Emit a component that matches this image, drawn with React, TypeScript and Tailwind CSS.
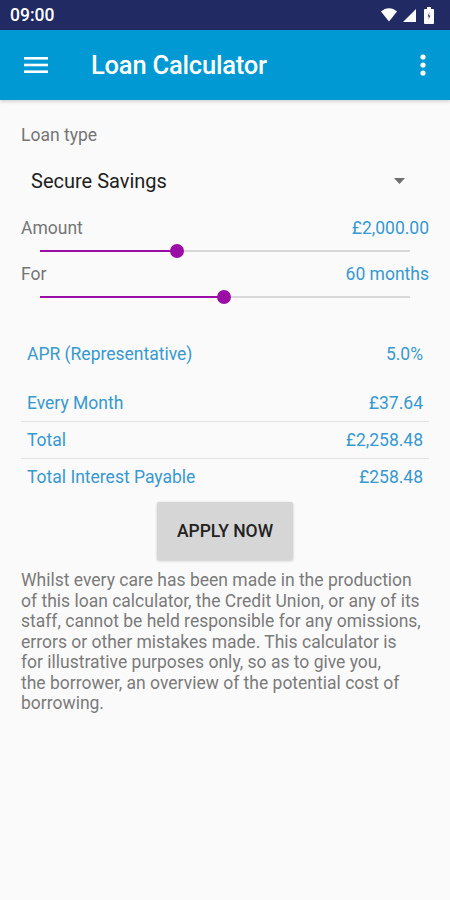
import React from 'react';

const font = { fontFamily: 'Roboto, "Noto Sans", sans-serif' };

const StatusBar: React.FC = () => (
  <div className="h-[30px] bg-[#222a63] flex items-center justify-between pl-[10px] pr-[16px] text-white">
    <span className="text-[17.5px] font-medium">09:00</span>
    <div className="flex items-center gap-[6px]">
      <svg width="16" height="14" viewBox="0 0 16 14">
        <path d="M0 3.5 C4.5 -1 11.5 -1 16 3.5 L8 13.5 Z" fill="#fff" />
      </svg>
      <svg width="13" height="13" viewBox="0 0 13 13">
        <path d="M13 0 L13 13 L0 13 Z" fill="#fff" />
      </svg>
      <svg width="10" height="17" viewBox="0 0 10 17" className="ml-[2px]">
        <rect x="3" y="0" width="4" height="2" fill="#fff" />
        <rect x="0" y="2" width="10" height="15" rx="1" fill="#fff" />
        <path d="M5.6 5 L3.6 9.5 L5 9.5 L4.4 13 L6.4 8.5 L5 8.5 Z" fill="#222a63" />
      </svg>
    </div>
  </div>
);

const AppBar: React.FC = () => (
  <div className="h-[70px] bg-[#0199d4] flex items-center text-white shadow-[0_2px_3px_rgba(0,0,0,0.15)]">
    <div className="w-[91px] pl-[24px]">
      <svg width="24" height="18" viewBox="0 0 24 18">
        <rect x="0" y="1" width="24" height="2.6" fill="#fff" />
        <rect x="0" y="7.7" width="24" height="2.6" fill="#fff" />
        <rect x="0" y="14.4" width="24" height="2.6" fill="#fff" />
      </svg>
    </div>
    <h1 className="flex-1 text-[25.5px] font-medium tracking-[-0.2px]">Loan Calculator</h1>
    <div className="pr-[24px]">
      <svg width="6" height="22" viewBox="0 0 6 22">
        <circle cx="3" cy="3" r="2.6" fill="#fff" />
        <circle cx="3" cy="11" r="2.6" fill="#fff" />
        <circle cx="3" cy="19" r="2.6" fill="#fff" />
      </svg>
    </div>
  </div>
);

const Slider: React.FC<{ pct: number }> = ({ pct }) => (
  <div className="relative h-[24px] mx-[19px]">
    <div className="absolute left-0 right-0 top-[11px] h-[2px] bg-[#d8d8d8]" />
    <div className="absolute left-0 top-[11px] h-[2px] bg-[#9b0ea5]" style={{ width: `${pct}%` }} />
    <div
      className="absolute top-[5px] w-[14px] h-[14px] -ml-[7px] rounded-full bg-[#9b0ea5]"
      style={{ left: `${pct}%` }}
    />
  </div>
);

const ResultRow: React.FC<{ label: string; value: string; divider?: boolean; className?: string }> = ({
  label,
  value,
  divider,
  className,
}) => (
  <div className={`${divider ? 'border-b border-[#e2e2e2]' : ''} ${className ?? ''}`}>
    <div className="flex justify-between px-[6px] h-[36px] items-center text-[17.5px] text-[#3799d0]">
      <span>{label}</span>
      <span>{value}</span>
    </div>
  </div>
);

const App: React.FC = () => {
  return (
    <div className="min-h-screen w-[450px] bg-[#fafafa]" style={font}>
      <StatusBar />
      <AppBar />
      <main className="px-[21px] pt-[24px]">
        <p className="text-[17.5px] text-[#757575] leading-[22px]">Loan type</p>
        <div className="flex items-center justify-between pl-[10px] pr-[24px] h-[46px] mt-[12px]">
          <span className="text-[20px] text-[#212121]">Secure Savings</span>
          <svg width="11" height="6" viewBox="0 0 11 6">
            <path d="M0 0 L11 0 L5.5 6 Z" fill="#6e6e6e" />
          </svg>
        </div>

        <div className="mt-[13px]">
          <div className="flex justify-between text-[17.5px] leading-[22px]">
            <span className="text-[#757575]">Amount</span>
            <span className="text-[#3799d0]">£2,000.00</span>
          </div>
          <Slider pct={37} />
        </div>
        <div>
          <div className="flex justify-between text-[17.5px] leading-[22px]">
            <span className="text-[#757575]">For</span>
            <span className="text-[#3799d0]">60 months</span>
          </div>
          <Slider pct={49.7} />
        </div>

        <div className="mt-[27px]">
          <ResultRow label="APR (Representative)" value="5.0%" />
          <ResultRow label="Every Month" value="£37.64" divider className="mt-[13px]" />
          <ResultRow label="Total" value="£2,258.48" divider />
          <ResultRow label="Total Interest Payable" value="£258.48" />
        </div>

        <div className="flex justify-center mt-[7px]">
          <button className="w-[136px] h-[58px] bg-[#d6d6d6] rounded-[2px] shadow-[0_1px_3px_rgba(0,0,0,0.2)] text-[17.5px] font-medium text-[#222222]">
            APPLY NOW
          </button>
        </div>

        <p className="mt-[10px] text-[17.5px] leading-[20.5px] text-[#7a7a7a] pr-[7px]">
          Whilst every care has been made in the production of this loan calculator, the Credit Union, or any of its
          staff, cannot be held responsible for any omissions, errors or other mistakes made. This calculator is for
          illustrative purposes only, so as to give you,
          <br />
          the borrower, an overview of the potential cost of borrowing.
        </p>
      </main>
    </div>
  );
};

export default App;
